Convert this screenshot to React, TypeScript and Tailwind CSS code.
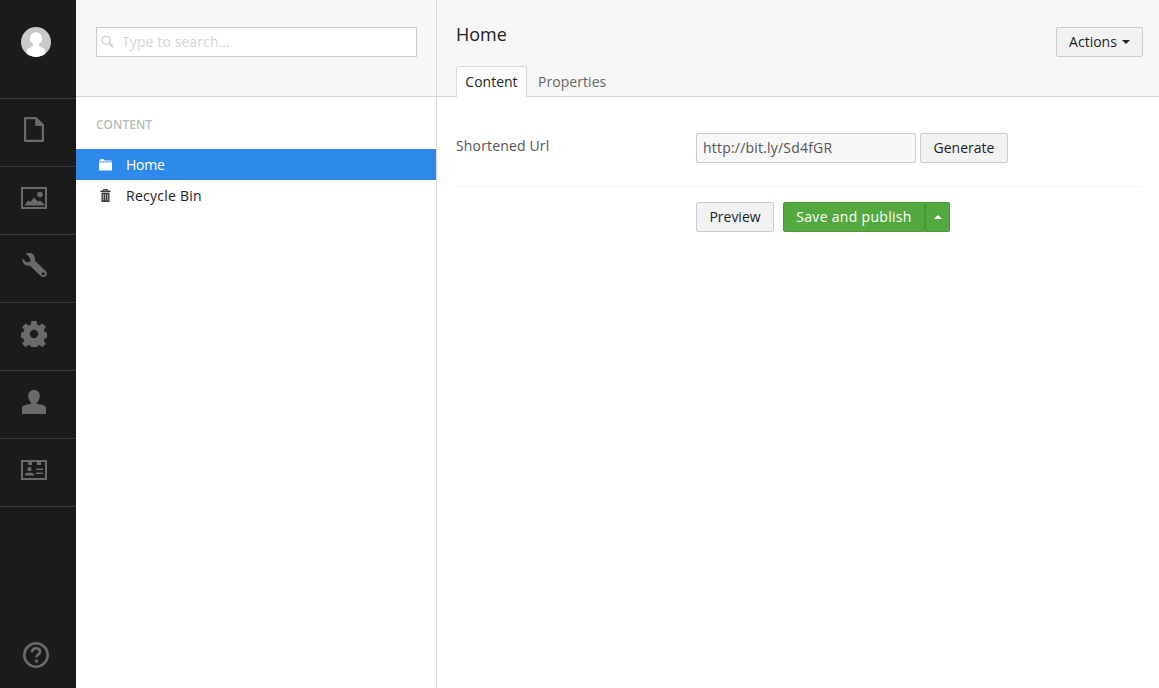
import type { ReactNode } from 'react';

const FileIcon = () => (
    <svg width="20" height="25" viewBox="0 0 20 25">
        <path fillRule="evenodd" fill="#6a6a6a" d="M1 0h11.500L20 7.500V24a1 1 0 0 1-1 1H1a1 1 0 0 1-1-1V1a1 1 0 0 1 1-1zM2.200 2.200v20.600h15.600V9h-6.600V2.200z" />
        <path fill="#6a6a6a" d="M13 1.500l5.800 6.300H13z" />
    </svg>
);

const ImageIcon = () => (
    <svg width="26" height="22" viewBox="0 0 26 22">
        <path fillRule="evenodd" fill="#6a6a6a" d="M0 0h26v22H0zM2 2v18h22V2z" />
        <circle cx="19" cy="7.500" r="2.800" fill="#6a6a6a" />
        <path fill="#6a6a6a" d="M3.500 18.500l3.500-5 2.500 1.500 3.500-4.500 4 4 2-1 4.500 4v1z" />
    </svg>
);

const WrenchIcon = () => (
    <svg width="25" height="25" viewBox="0 0 25 25">
        <path fillRule="evenodd" fill="#6a6a6a" d="M.3 5.500l4.500 4 3.800-1-1-4L3.600.3C6.800-.8 10.600-.1 12.200 2.700c1 1.800 1 3.400.6 4.800l11 10.500c1.500 1.500 1.500 3.700.1 5.100-1.500 1.500-3.700 1.500-5.200 0L7.600 12.500c-2 .5-3.900.1-5.300-1.200C.8 9.900 0 7.400.3 5.500zM21.300 19.300a1.500 1.500 0 1 0 0 3 1.500 1.500 0 0 0 0-3z" />
    </svg>
);

const GearIcon = () => (
    <svg width="26" height="26" viewBox="0 0 26 26">
        <path fillRule="evenodd" fill="#6a6a6a" d="M10.500 0h5l.7 3.600 2.200.9 3-2.100 3.500 3.500-2.100 3 .9 2.200 3.300.7v5l-3.300.7-.9 2.200 2.100 3-3.500 3.500-3-2.100-2.200.9-.7 3.300h-5l-.7-3.300-2.200-.9-3 2.100-3.500-3.500 2.100-3-.9-2.200-3.300-.7v-5l3.300-.7.9-2.200-2.100-3 3.500-3.500 3 2.100 2.200-.9zM13 8.800a4.200 4.200 0 1 0 0 8.400 4.200 4.200 0 0 0 0-8.400z" />
    </svg>
);

const UserIcon = () => (
    <svg width="24" height="24" viewBox="0 0 24 24">
        <path fill="#6a6a6a" d="M12 0c3.300 0 5.800 2.500 5.800 6 0 2.800-1.300 5.200-2.800 6.500v1.300c2.500.6 5 .9 7.200 1.800 1.300.6 1.800 1.500 1.800 3V24H0v-5.400c0-1.500.5-2.400 1.800-3 2.200-.9 4.700-1.200 7.200-1.800v-1.300C7.500 11.200 6.200 8.800 6.200 6 6.200 2.500 8.700 0 12 0z" />
    </svg>
);

const CardIcon = () => (
    <svg width="26" height="20" viewBox="0 0 26 20">
        <path fillRule="evenodd" fill="#6a6a6a" d="M0 0h26v20H0zM2 2v16h22V2z" />
        <path fill="#6a6a6a" d="M7 2h4v3H7zM16 2h4v3h-4z" />
        <circle cx="8.500" cy="9.200" r="2.100" fill="#6a6a6a" />
        <path fill="#6a6a6a" d="M4 15.500v-1.200c0-1 1.800-1.500 4.500-1.500s4.500.5 4.500 1.500v1.200zM15 8.500h7v1.500h-7zM15 12.500h7V14h-7z" />
    </svg>
);

const HelpIcon = () => (
    <svg width="26" height="26" viewBox="0 0 26 26" fill="none">
        <circle cx="13" cy="13" r="11.700" stroke="#6a6a6a" strokeWidth="2.600" />
        <path d="M9 10.200c0-2.400 1.700-3.800 4-3.800s4 1.300 4 3.300c0 2.800-3.600 2.800-3.600 5.600" stroke="#6a6a6a" strokeWidth="2.800" />
        <rect x="11.900" y="17.600" width="3" height="2.900" fill="#6a6a6a" />
    </svg>
);

const Avatar = () => (
    <svg width="30" height="30" viewBox="0 0 30 30">
        <defs>
            <clipPath id="avatar-clip">
                <circle cx="15" cy="15" r="15" />
            </clipPath>
        </defs>
        <g clipPath="url(#avatar-clip)">
            <rect width="30" height="30" fill="#c9c9c9" />
            <circle cx="15" cy="11.500" r="6.200" fill="#fff" />
            <path fill="#fff" d="M12 17h6v2l6 3.500V30H6v-7.500l6-3.500z" />
        </g>
    </svg>
);

const SearchGlyph = () => (
    <svg width="13" height="13" viewBox="0 0 13 13" fill="none" stroke="#d4d4d4">
        <circle cx="5.200" cy="5.200" r="4" strokeWidth="1.500" />
        <path d="M8.300 8.300l3.800 3.800" strokeWidth="2.200" />
    </svg>
);

const FolderGlyph = () => (
    <svg width="13" height="12" viewBox="0 0 13 12" fill="#fff">
        <path d="M.5 2V1q0-.7.7-.7h3.300q.7 0 .9.7l.2.600h7v.9H.5z" />
        <path d="M0 3.300h13V11.500H0z" />
    </svg>
);

const TrashGlyph = () => (
    <svg width="13" height="13" viewBox="0 0 13 13">
        <path fillRule="evenodd" fill="#3a3a3a" d="M4.500 0h4l.5 1.500h2.500V3h-10V1.500H4zM5.300 1l-.2.500h2.800L7.700 1z" />
        <path fill="#3a3a3a" d="M2.500 3.600h8V13h-8z" />
        <path fill="#b9a6cf" d="M3.800 5h1v6.500h-1zM6 5h1v6.500H6zM8.200 5h1v6.500h-1z" />
    </svg>
);

const navIcons: ReactNode[] = [
    <FileIcon />,
    <ImageIcon />,
    <WrenchIcon />,
    <GearIcon />,
    <UserIcon />,
    <CardIcon />,
];

const Btn = ({ children, className = '' }: { children: ReactNode; className?: string }) => (
    <button className={`h-[30px] pb-[2px] border border-[#ccc] bg-[#f2f2f2] rounded-[2px] text-[14px] text-[#222] flex items-center justify-center ${className}`}>
        {children}
    </button>
);

export default function App() {
    return (
        <div className="h-[688px] w-[1159px] flex overflow-hidden bg-white text-[14px] font-['Open_Sans',sans-serif]">
            {/* Главное меню */}
            <div className="w-[76px] shrink-0 bg-[#1b1b1b] flex flex-col">
                <div className="h-[99px] shrink-0 border-b border-[#3a3a3a] flex justify-center pt-[27px] pr-[4px]">
                    <Avatar />
                </div>
                {navIcons.map((icon, i) => (
                    <div key={i} className="h-[68px] shrink-0 border-b border-[#3a3a3a] flex items-center justify-center pr-[8px] pb-[6px]">
                        {icon}
                    </div>
                ))}
                <div className="mt-auto h-[68px] flex items-center justify-center pt-[2px] pr-[4px]">
                    <HelpIcon />
                </div>
            </div>

            {/* Дерево контента */}
            <div className="w-[361px] shrink-0 border-r border-[#d9d9d9] flex flex-col">
                <div className="h-[97px] shrink-0 bg-[#f7f7f7] border-b border-[#d9d9d9] pt-[27px] pl-[20px]">
                    <div className="w-[321px] h-[30px] pb-[2px] border border-[#ccc] bg-white flex items-center pl-[4px] gap-[8px]">
                        <SearchGlyph />
                        <span className="text-[#d5d5d5] text-[14px] tracking-[0.1px]">Type to search...</span>
                    </div>
                </div>
                <div className="pt-[18px] pb-[15px] pl-[20px] h-[52px] text-[12px] font-semibold text-[#bbb] leading-[19px]">
                    CONTENT
                </div>
                <div className="h-[31px] bg-[#2e8aea] text-white flex items-center pl-[23px] gap-[14px]">
                    <FolderGlyph />
                    <span className="tracking-[-0.2px]">Home</span>
                </div>
                <div className="h-[31px] text-[#222] flex items-center pl-[23px] gap-[14px]">
                    <TrashGlyph />
                    <span className="tracking-[0.25px]">Recycle Bin</span>
                </div>
            </div>

            {/* Редактор */}
            <div className="flex-1 flex flex-col min-w-0">
                <div className="h-[97px] shrink-0 bg-[#f7f7f7] border-b border-[#d9d9d9] flex justify-between pl-[19px] pr-[16px] relative">
                    <div className="flex flex-col">
                        <div className="shrink-0 text-[18px] text-[#222] leading-[24px] pt-[22px] h-[66px]">Home</div>
                        <div className="shrink-0 flex items-end">
                            <div className="h-[31px] w-[71px] pb-[2px] bg-white border border-b-0 border-[#d9d9d9] rounded-t-[3px] flex items-center justify-center text-[#222] relative z-10">
                                Content
                            </div>
                            <div className="h-[31px] pl-[11px] flex items-center text-[#666] tracking-[0.05px]">Properties</div>
                        </div>
                    </div>
                    <div className="pt-[27px]">
                        <Btn className="w-[87px] gap-[5px]">
                            Actions
                            <span className="w-0 h-0 mt-[2px] border-x-[4px] border-x-transparent border-t-[4px] border-t-[#222]" />
                        </Btn>
                    </div>
                </div>

                <div className="pl-[19px] pr-[16px]">
                    <div className="flex h-[90px] pt-[36px] border-b border-[#f5f5f5]">
                        <div className="w-[240px] text-[#555] leading-[24px] pt-[1px] tracking-[0.15px]">Shortened Url</div>
                        <div className="flex gap-[4px]">
                            <div className="w-[220px] h-[30px] pb-[1px] border border-[#ccc] rounded-[2px] bg-[#f7f7f7] flex items-center pl-[6px] text-[#555] tracking-[0.2px]">
                                http://bit.ly/Sd4fGR
                            </div>
                            <Btn className="w-[88px]">Generate</Btn>
                        </div>
                    </div>
                    <div className="flex pl-[240px] pt-[15px] gap-[9px]">
                        <Btn className="w-[78px]">Preview</Btn>
                        <div className="flex">
                            <button className="h-[30px] pb-[2px] w-[142px] bg-[#53a93f] text-white border border-[#4a9a38] rounded-l-[2px] text-[14px] tracking-[0.3px]">
                                Save and publish
                            </button>
                            <button className="h-[30px] w-[25px] bg-[#53a93f] border border-l-[#46903a] border-[#4a9a38] rounded-r-[2px] flex items-center justify-center">
                                <span className="w-0 h-0 border-x-[4px] border-x-transparent border-b-[4px] border-b-white" />
                            </button>
                        </div>
                    </div>
                </div>
            </div>
        </div>
    );
}
